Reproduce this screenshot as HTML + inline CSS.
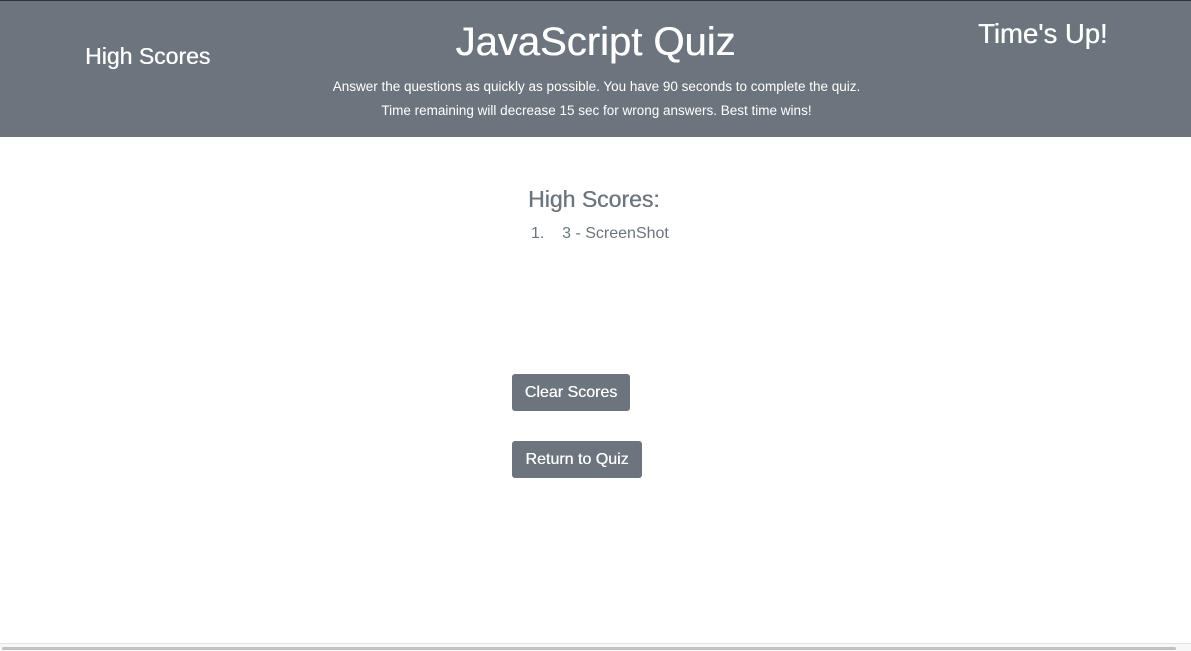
<!DOCTYPE html>
<html><head><meta charset="utf-8"><style>
body{margin:0;width:1191px;height:650px;position:relative;overflow:hidden;background:#fff;font-family:"Liberation Sans",sans-serif;}
.hdr{position:absolute;left:0;top:0;width:1191px;height:137px;background:#6c757d;border-top:1px solid #333;box-sizing:border-box;color:#fff;}
.t{position:absolute;white-space:nowrap;}
.m{text-shadow:0.4px 0 0 currentColor;}
.btn{position:absolute;background:#6c757d;color:#fff;border-radius:3px;font-size:16px;text-align:center;line-height:37px;height:37px;text-shadow:0.3px 0 0 #fff;}
</style></head><body>
<div class="hdr">
<div class="t m" style="left:85px;top:42px;font-size:23px;">High Scores</div>
<div class="t m" style="left:0;width:1191px;text-align:center;top:19px;font-size:40px;">JavaScript Quiz</div>
<div class="t m" style="left:978px;top:17px;font-size:27.5px;">Time's Up!</div>
<div class="t" style="left:0;width:1193px;text-align:center;top:78px;font-size:13.5px;">Answer the questions as quickly as possible. You have 90 seconds to complete the quiz.</div>
<div class="t" style="left:0;width:1193px;text-align:center;top:102px;font-size:13.5px;">Time remaining will decrease 15 sec for wrong answers. Best time wins!</div>
</div>
<div class="t m" style="left:528px;top:186px;font-size:23px;color:#6c757d;">High Scores:</div>
<div class="t" style="left:531px;top:225px;font-size:16px;color:#6c757d;">1.&nbsp;&nbsp;&nbsp;&nbsp;3 - ScreenShot</div>
<div class="btn" style="left:512px;top:374px;width:118px;">Clear Scores</div>
<div class="btn" style="left:512px;top:441px;width:130px;">Return to Quiz</div>
<div style="position:absolute;left:0;top:643px;width:1191px;height:7px;background:#f7f7f7;border-top:1px solid #e2e2e2;"></div>
<div style="position:absolute;left:2px;top:647px;width:1174px;height:3px;background:#c1c1c1;border-radius:2px;"></div>
</body></html>
